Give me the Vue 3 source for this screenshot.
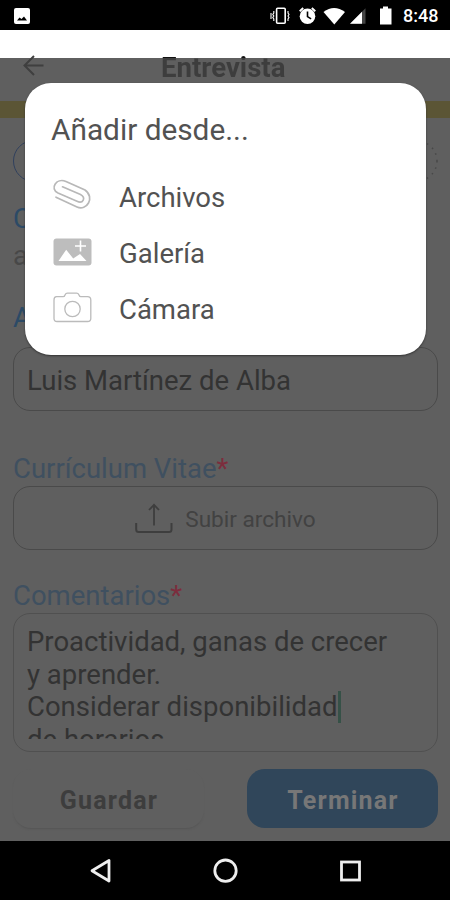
<script setup>
const options = [
  { id: 'files', label: 'Archivos' },
  { id: 'gallery', label: 'Galería' },
  { id: 'camera', label: 'Cámara' },
]
const lines = ['Proactividad, ganas de crecer', 'y aprender.', 'Considerar disponibilidad', 'de horarios.']
</script>

<template>
  <div class="phone">
    <div class="status">
      <svg class="picture" width="16" height="16" viewBox="0 0 16 16">
        <rect width="16" height="16" rx="2" fill="#fff" />
        <path d="M3 12.5 5.5 9.6 7.5 11 10 8.6 13 12.5Z" fill="#000" />
      </svg>
      <svg class="indicators" width="130" height="20" viewBox="0 0 130 20">
        <g fill="none" stroke="#fff" stroke-width="1.6">
          <rect x="6.6" y="2.3" width="8.6" height="15" rx="1" />
          <path d="M3.8 5v2l-1 1.5 1 1.5-1 1.5 1 1.5v2M18 5v2l1 1.5-1 1.5 1 1.5-1 1.5v2M1 7v6" stroke-width="1.1" />
        </g>
        <circle cx="37.5" cy="10.3" r="7.8" fill="#fff" />
        <path d="M37.5 5.6v5l3.6 2.3" fill="none" stroke="#000" stroke-width="1.6" />
        <path d="M29.7 5.2 33.2 2M41.8 2l3.5 3.2" stroke="#fff" stroke-width="1.9" />
        <path d="M53.5 6Q64 -2 75 6L64.3 18.6Z" fill="#fff" />
        <path d="M80 17.700 95.5 2.200v15.500Z" fill="#444" />
        <path d="M80 17.700 92 5.700v12Z" fill="#fff" />
        <path d="M110 2.500h3V.5h5v2h3.500v16H110Z" fill="#fff" />
      </svg>
      <span class="clock">8:48</span>
    </div>

    <div class="page">
      <header class="header">
        <svg class="back" width="22" height="22" viewBox="0 0 22 22" fill="none" stroke="#3f3f3f" stroke-width="2">
          <path d="M20.500 10.500H2M11 1 1.500 10.500 11 20" />
        </svg>
        <h1 class="title">Entrevista</h1>
      </header>
      <div class="band"></div>
      <div class="steps">
        <span class="step"></span>
        <svg width="42" height="42" viewBox="0 0 42 42" fill="none" stroke="#484848" stroke-width="1.500">
          <circle cx="21" cy="21" r="20" stroke-dasharray="1.500 5" />
        </svg>
      </div>
      <div class="heading label">Candidato</div>
      <div class="subtitle">ab</div>
      <div class="label author">Autor</div>
      <div class="field name"><span>Luis Martínez de Alba</span></div>
      <div class="label cv"><span>Currículum Vitae</span><b>*</b></div>
      <div class="field upload">
        <svg width="38" height="31" viewBox="0 0 38 31" fill="none" stroke="#3e3e3e">
          <path d="M1.200 20v6.500q0 2.500 2.500 2.500H34q2.500 0 2.500-2.500V20" stroke-width="2" />
          <path d="M19 22.500V2M14 7l5-5.200L24 7" stroke-width="1.800" />
        </svg>
        <span>Subir archivo</span>
      </div>
      <div class="label comments"><span>Comentarios</span><b>*</b></div>
      <div class="field area">
        <div class="lines">
          <div v-for="(line, i) in lines" :key="line" class="line"><span>{{ line }}</span><i v-if="i === 2" class="caret"></i></div>
        </div>
      </div>
      <div class="actions">
        <button class="save">Guardar</button>
        <button class="finish">Terminar</button>
      </div>

      <section class="dialog">
        <h2>Añadir desde...</h2>
        <div v-for="option in options" :key="option.id" class="option">
          <svg v-if="option.id === 'files'" width="40" height="34" viewBox="0 0 40 34" fill="none" stroke="#b8b8b8" stroke-width="1.700" stroke-linecap="round">
            <path d="M4 18.200 25 28C34.500 32.500 43.500 18.500 33 11L14 2.500C4 -1.500 -2.500 10 6 14L25 22.300C31 25 34.500 18.500 28.500 15.500L10.500 7.800" />
          </svg>
          <svg v-else-if="option.id === 'gallery'" width="40" height="34" viewBox="0 0 40 34">
            <rect x="1.500" y="3.500" width="38" height="27" rx="3" fill="#bdbdbd" />
            <path d="M6.500 26 14.200 14.700 21.200 23.500 28 19 34.500 26Z" fill="#fff" />
            <path d="M28.500 5.500v11M23 11h11" stroke="#fff" stroke-width="1.600" />
          </svg>
          <svg v-else width="40" height="34" viewBox="0 0 40 34" fill="none" stroke="#bbb" stroke-width="1.300">
            <path d="M4.500 5.700H11Q12.500 5.700 13 4 13.800 2.200 15.500 2.200H24.500Q26.200 2.200 27 4 27.500 5.700 29 5.700H35.500Q38.800 5.700 38.800 9V27.500Q38.800 30.500 35.500 30.500H5Q2 30.500 2 27.500V9Q2 5.700 4.500 5.700Z" />
            <circle cx="20.500" cy="18" r="7.700" />
          </svg>
          <span>{{ option.label }}</span>
        </div>
      </section>
    </div>

    <nav class="nav">
      <svg width="450" height="59" viewBox="0 0 450 59" fill="none" stroke="#eee" stroke-width="2.800" stroke-linejoin="round">
        <path d="M109 19.500V40L92 29.700Z" />
        <circle cx="225.500" cy="29.700" r="10.700" />
        <rect x="341.500" y="21" width="18" height="18" stroke-linejoin="miter" />
      </svg>
    </nav>
  </div>
</template>

<style>
body { margin: 0; }
</style>

<style scoped>
.phone { width: 450px; height: 900px; display: flex; flex-direction: column; overflow: hidden; background: #000; font-family: Roboto, "Liberation Sans", sans-serif; color: #333; }
.phone * { box-sizing: border-box; }
.status { height: 30px; display: flex; align-items: center; padding: 0 12px 0 14px; color: #fff; flex: none; }
.clock { width: 35px; margin-left: 12px; font-size: 18px; font-weight: 500; white-space: nowrap; line-height: 30px; padding-top: 2px; }
.picture { margin-top: 1px; }
.indicators { width: 130px; margin: 1px -9px 0 auto; }
.page { position: relative; height: 811px; flex: none; padding: 0 12px 0 13px; background: linear-gradient(#fff 28px, #5f5f5f 28px); }
.header { height: 71px; display: flex; padding: 25px 0 0 10px; }
.back { flex: none; }
.title { margin: -2px 0 0 116px; font-size: 27.600px; line-height: 30px; height: 30px; font-weight: 700; white-space: nowrap; color: transparent; background: linear-gradient(#111 5px, #3d3d3d 5px); background-clip: text; }
.band { height: 17px; margin: 0 -12px 0 -13px; background: #5b5535; }
.steps { height: 97px; display: flex; justify-content: space-between; padding-top: 22px; }
.step { width: 42px; height: 42px; border: 1.500px solid #30405d; border-radius: 50%; }
.label { height: 30px; line-height: 32px; font-size: 27.500px; white-space: nowrap; color: #3f5060; }
.label b { color: #7c2d3d; font-weight: 400; }
.heading { margin-top: -12px; color: #2c4a66; }
.subtitle { height: 30px; margin-top: 7px; line-height: 32px; font-size: 27.500px; color: #484848; }
.author { margin-top: 32px; color: #2c4a66; }
.field { border: 1.500px solid #4a4a4a; border-radius: 17px; }
.name { margin-top: 15px; height: 64px; padding: 0 13px; line-height: 66px; font-size: 27.500px; white-space: nowrap; }
.cv { margin-top: 42px; height: 33px; }
.upload { height: 64px; display: flex; justify-content: center; align-items: center; gap: 12px; font-size: 22.600px; color: #424242; }
.upload span { padding-top: 3px; }
.comments { margin-top: 30px; height: 33px; }
.area { height: 139px; padding: 12px 13px 0; border-color: #505050; }
.lines { height: 113px; overflow: hidden; font-size: 27.500px; }
.line { display: flex; height: 32.500px; line-height: 32.500px; white-space: nowrap; }
.caret { width: 3px; height: 32px; background: #365147; }
.actions { display: flex; justify-content: space-between; padding-top: 17px; }
button { height: 59px; width: 191px; border: 0; border-radius: 18px; padding: 3px 0 0 1px; font: 700 25px Roboto, sans-serif; letter-spacing: 1.200px; }
.save { background: #5f5f5f; box-shadow: 0 2px 2px -1px #555; color: #3d3d3d; }
.finish { background: #30465a; color: #777; }
.dialog { position: absolute; left: 25px; top: 53px; width: 401px; height: 272px; padding: 31px 26px; border-radius: 26px; background: #fff; box-shadow: 0 1px 2px #333; color: #525252; }
.dialog h2 { margin: 0; height: 54px; line-height: 32px; font-size: 29.800px; font-weight: 400; white-space: nowrap; }
.option { height: 56px; display: flex; align-items: center; gap: 27px; font-size: 27.500px; white-space: nowrap; }
.option svg { margin-left: 1px; }
.option span { padding-top: 2px; }
.nav { height: 59px; flex: none; background: #000; }
.nav svg { display: block; }
</style>
